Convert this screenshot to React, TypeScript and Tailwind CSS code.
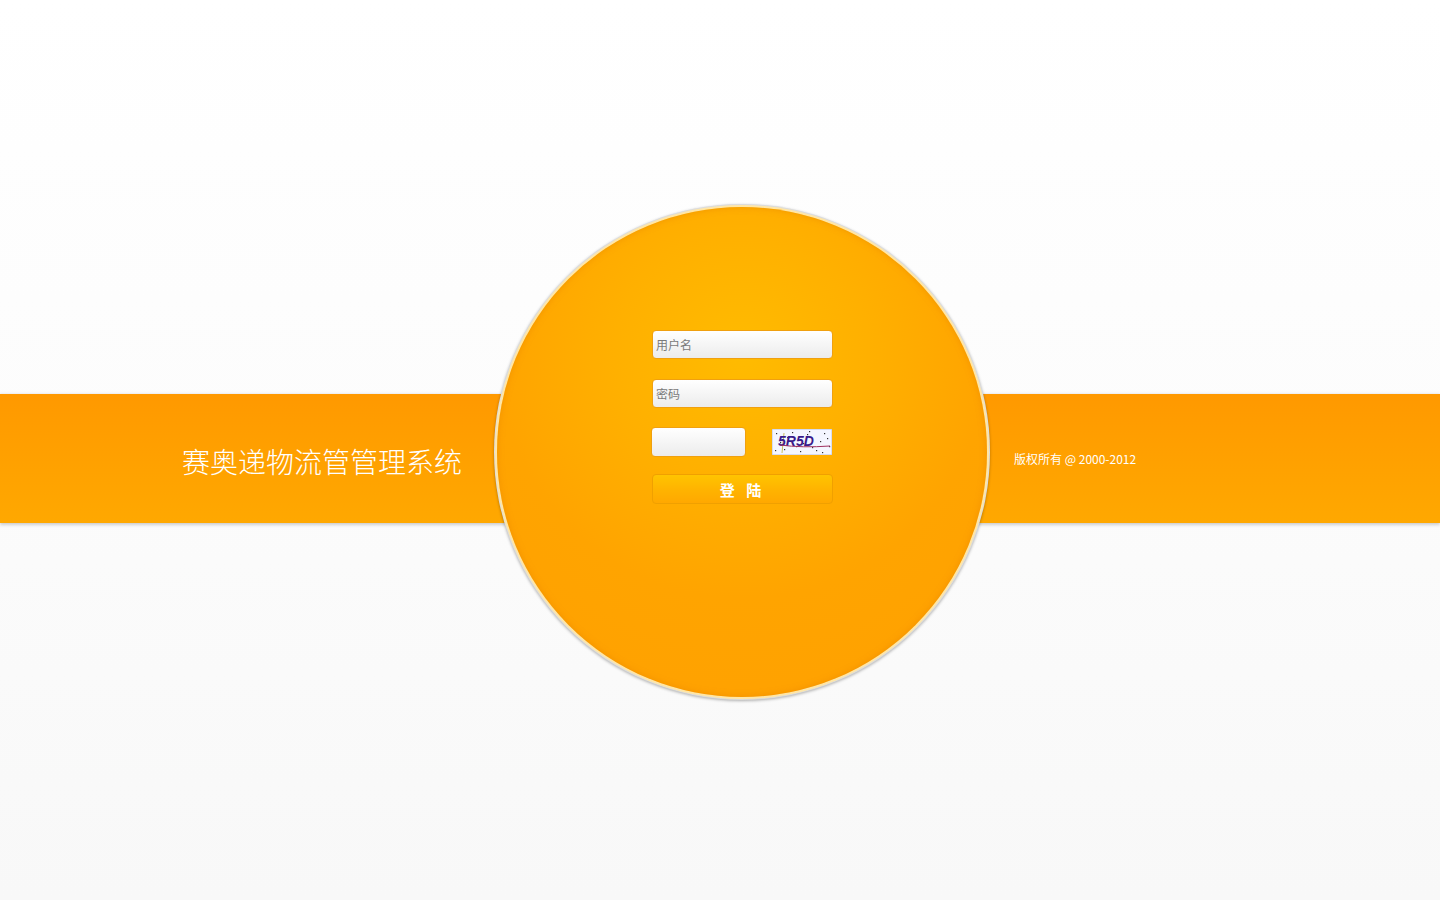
import { useState } from "react";

const Captcha = () => (
  <svg width="60" height="26" viewBox="0 0 60 26" className="block">
    <rect x="0" y="0" width="60" height="26" fill="#f4f6ff" stroke="#b8c0e0" strokeWidth="1" />
    {[
      [4, 4], [12, 20], [20, 3], [28, 22], [35, 5], [44, 21], [52, 4], [57, 17], [8, 13], [48, 12],
      [15, 8], [40, 18], [55, 9], [3, 21], [31, 14], [24, 17], [50, 23], [37, 2],
    ].map(([x, y], i) => (
      <rect key={i} x={x} y={y} width="1.2" height="1.2" fill="#333" />
    ))}
    <line x1="10" y1="24" x2="12" y2="4" stroke="#c8c060" strokeWidth="1" />
    <text
      x="6"
      y="17"
      fill="#3a1a8a"
      fontFamily="'Liberation Sans', sans-serif"
      fontWeight="bold"
      fontStyle="italic"
      fontSize="14"
    >
      5R5D
    </text>
    <path d="M8 16 Q30 19 58 17" stroke="#a03060" strokeWidth="1" fill="none" />
  </svg>
);

export default function App() {
  const [user, setUser] = useState("");
  const [pwd, setPwd] = useState("");
  const [code, setCode] = useState("");

  const input =
    "block w-full h-full rounded-[4px] border border-[#f0a010] bg-gradient-to-b from-white to-[#ececec] px-[3px] text-[12px] text-[#555] outline-none placeholder:text-[#7a7a7a]";

  return (
    <div
      className="relative h-[900px] w-full overflow-hidden bg-gradient-to-b from-white via-[#fcfcfc] to-[#f8f8f8]"
      style={{ fontFamily: "'Noto Sans CJK SC', 'Liberation Sans', sans-serif" }}
    >
      <div className="h-[394px]" />
      <div className="flex h-[129px] items-center bg-gradient-to-b from-[#ff9900] to-[#ffa800] shadow-[0_2px_3px_rgba(0,0,0,0.18),0_-1px_2px_rgba(0,0,0,0.06)]">
        <div className="w-[1014px] pl-[182px] pt-[4px] text-[28px] font-light leading-none text-white">
          赛奥递物流管管理系统
        </div>
        <div className="pt-[1px] text-[12px] leading-none text-white">
          版权所有 @ 2000-2012
        </div>
      </div>

      <div className="absolute left-[494px] top-[204px] h-[496px] w-[496px] rounded-full bg-[#dcdcdc] p-[1px] shadow-[0_1px_3px_rgba(0,0,0,0.3)]">
        <div className="h-full w-full rounded-full bg-[#ffe6a6] p-[2px]">
          <div className="h-full w-full rounded-full bg-[radial-gradient(circle_at_50%_30%,#ffbb00_0%,#ffb000_30%,#ffa400_58%,#ffa000_100%)] pl-[155px] pt-[123px] shadow-[inset_0_0_6px_rgba(230,130,0,0.5)]">
            <div className="flex w-[181px] flex-col">
              <div className="h-[29px]">
                <input className={input} placeholder="用户名" value={user} onChange={(e) => setUser(e.target.value)} />
              </div>
              <div className="mt-[20px] h-[29px]">
                <input
                  className={input}
                  type="password"
                  placeholder="密码"
                  value={pwd}
                  onChange={(e) => setPwd(e.target.value)}
                />
              </div>
              <div className="mt-[19px] flex items-center justify-between">
                <div className="-ml-[1px] h-[30px] w-[95px]">
                  <input className={input} value={code} onChange={(e) => setCode(e.target.value)} />
                </div>
                <div className="mr-[1px]">
                  <Captcha />
                </div>
              </div>
              <button className="mt-[17px] h-[30px] w-full rounded-[4px] border border-[#f0a000] bg-gradient-to-b from-[#ffc400] via-[#ffb400] to-[#ffa800] text-[15px] font-bold leading-none tracking-[4px] text-white">
                登 陆
              </button>
            </div>
          </div>
        </div>
      </div>
    </div>
  );
}
